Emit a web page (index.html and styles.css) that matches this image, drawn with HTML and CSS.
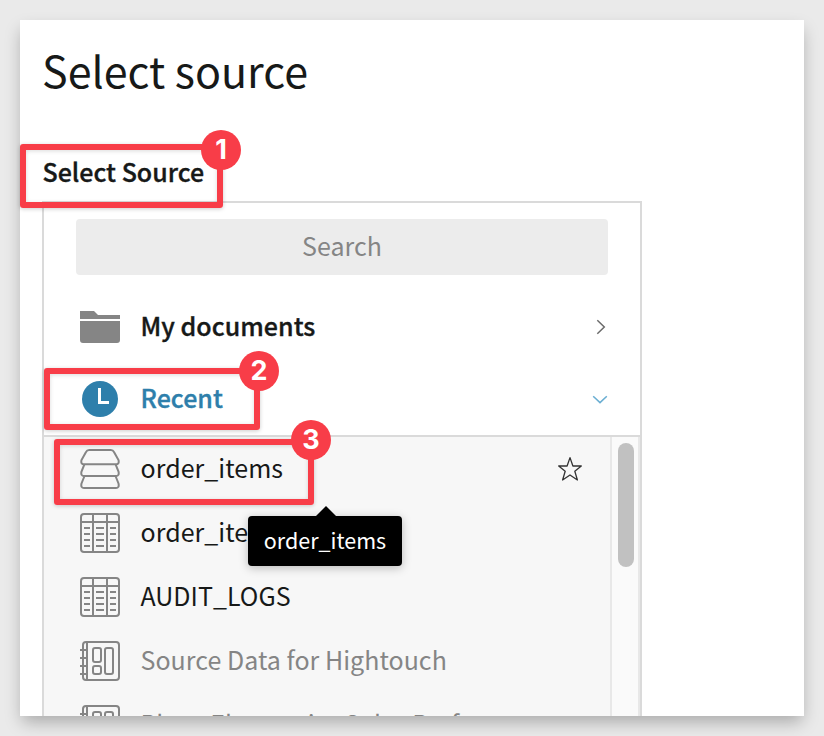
FILE: index.html
```html
<!DOCTYPE html>
<html lang="en">
<head>
<meta charset="utf-8">
<title>Select source</title>
<link rel="stylesheet" href="styles.css">
</head>
<body>
<svg class="defs" width="0" height="0">
  <symbol id="table" viewBox="0 0 40 40">
    <g fill="none" stroke="#858585" stroke-width="2">
      <rect x="1" y="1" width="38" height="38" rx="3"/>
      <path d="M1 9H39M13 1V39M27 1V39"/>
      <path d="M4 15H10M4 21H10M4 27H10M4 33H10M16 15H24M16 21H24M16 27H24M16 33H24M30 15H36M30 21H36M30 27H36M30 33H36"/>
    </g>
  </symbol>
  <symbol id="workbook" viewBox="0 0 40 40">
    <g fill="none" stroke="#858585" stroke-width="2">
      <rect x="3" y="1" width="36" height="38" rx="3"/>
      <path d="M7 1V39M0 9H7M0 17H7M0 25H7M0 33H7"/>
      <rect x="13" y="7" width="8" height="14" rx="2"/>
      <rect x="13" y="25" width="8" height="8" rx="2"/>
      <rect x="25" y="7" width="8" height="26" rx="2"/>
    </g>
  </symbol>
</svg>
<main class="card">
  <h1 class="title">Select source</h1>
  <h2 class="label">Select Source<span class="mark mark-1"><b class="badge">1</b></span></h2>
  <section class="panel">
    <div class="search">Search</div>
    <div class="group">
      <svg class="icon" viewBox="0 0 40 40" fill="#858585"><path d="M0 4H14L18 8H40V12H0ZM0 14H40V33Q40 36 37 36H3Q0 36 0 33Z"/></svg>
      <span class="name">My documents</span>
      <svg class="chevron" viewBox="0 0 16 16"><path d="M5.3 1.2L12.3 8L5.3 14.8" fill="none" stroke="#6b6b6b" stroke-width="1.5"/></svg>
    </div>
    <div class="group active">
      <svg class="icon" viewBox="0 0 40 40"><circle cx="20" cy="20" r="18" fill="#2e7fab"/><path d="M19.500 9V23.500H29" fill="none" stroke="#fff" stroke-width="3"/></svg>
      <span class="name">Recent</span>
      <svg class="chevron" viewBox="0 0 16 16"><path d="M1.2 5.2L8 11.6L14.8 5.2" fill="none" stroke="#6aaed2" stroke-width="1.5"/></svg>
      <span class="mark mark-2"><b class="badge">2</b></span>
    </div>
    <div class="results">
      <div class="list">
        <div class="item">
          <svg class="icon" viewBox="0 0 40 40" fill="none" stroke="#858585" stroke-width="2"><path d="M9.200 1H30.800Q33 1 34 3L38.500 11Q39.500 15.200 36 15.200H4Q.5 15.200 1.500 11L6 3Q7 1 9.200 1Z"/><path d="M4.500 15.200L1.500 22.500Q.500 27 4 27H36Q39.500 27 38.500 22.500L35.500 15.200"/><path d="M4.500 27L1.500 34.500Q.500 39 4 39H36Q39.500 39 38.500 34.500L35.500 27"/></svg>
          <span class="name">order_items</span>
          <svg class="star" viewBox="0 0 26 26"><path d="M13 1.600L15.900 10H24.300L17.800 15.200L20.400 24L13 19L5.600 24L8.200 15.200L1.700 10H10.100Z" fill="none" stroke="#333" stroke-width="1.300" stroke-linejoin="round"/></svg>
          <span class="mark mark-3"><b class="badge">3</b></span>
          <span class="tooltip">order_items</span>
        </div>
        <div class="item"><svg class="icon"><use href="#table"/></svg><span class="name">order_items</span></div>
        <div class="item"><svg class="icon"><use href="#table"/></svg><span class="name">AUDIT_LOGS</span></div>
        <div class="item muted"><svg class="icon"><use href="#workbook"/></svg><span class="name">Source Data for Hightouch</span></div>
        <div class="item muted"><svg class="icon"><use href="#workbook"/></svg><span class="name">Plugs Electronics Sales Performance</span></div>
      </div>
      <div class="track"><div class="thumb"></div></div>
    </div>
  </section>
</main>
</body>
</html>
```
FILE: styles.css
```css
* { box-sizing: border-box; }
html, body { height: 100%; margin: 0; }
body {
  padding: 20px;
  overflow: hidden;
  background: #eaeaea;
  color: #171918;
  font-family: "Noto Sans CJK SC", sans-serif;
}
.defs { position: absolute; }
.card {
  height: 696px;
  padding: 0 22px;
  background: #fff;
  box-shadow: 0 8px 16px -2px rgba(0, 0, 0, .28);
}
.title {
  height: 105px;
  margin: 0;
  font-size: 43px;
  font-weight: 400;
  line-height: 98px;
}
.label {
  position: relative;
  height: 76px;
  margin: 0;
  padding: 26px 0 0 .5px;
  font-size: 25px;
  font-weight: 500;
  line-height: 40px;
  -webkit-text-stroke: .35px currentColor;
}
.panel {
  width: 600px;
  height: 515px;
  border: 2px solid #dadada;
  border-bottom: 0;
}
.search {
  height: 56px;
  margin: 16px 32px;
  border-radius: 4px;
  background: #ececec;
  color: #858585;
  font-size: 25px;
  line-height: 52px;
  text-align: center;
}
.group {
  position: relative;
  display: flex;
  align-items: center;
  height: 72px;
  padding: 0 32px 0 36px;
  font-size: 25px;
  font-weight: 500;
}
.group .name { -webkit-text-stroke: .35px currentColor; }
.active { color: #2e7fab; }
.icon { flex: none; width: 40px; height: 40px; margin-right: 20px; }
.name { flex: 1; padding: 0 0 4px .5px; letter-spacing: .03px; white-space: nowrap; }
.chevron { width: 16px; height: 16px; }
.results {
  display: flex;
  height: 281px;
  border-top: 2px solid #dadada;
  background: #f7f7f7;
}
.list { flex: 1; height: 279px; clip-path: inset(-40px -40px 0 -40px); }
.item {
  position: relative;
  display: flex;
  align-items: center;
  height: 64px;
  padding: 0 27px 0 36px;
  font-size: 25px;
}
.muted { color: #858585; }
.star { width: 26px; height: 26px; }
.track {
  width: 30px;
  padding: 6px 0 0 6px;
  border: solid #e8e8e8;
  border-width: 0 2px;
  background: #fafafa;
}
.thumb { width: 16px; height: 124px; border-radius: 8px; background: #c1c1c1; }
.mark {
  position: absolute;
  z-index: 2;
  border: 6px solid #f83d48;
  border-radius: 3px;
  box-shadow: 0 1px 4px rgba(0, 0, 0, .2), inset 0 1px 4px rgba(0, 0, 0, .15);
}
.badge {
  position: absolute;
  top: -20px;
  right: -24px;
  width: 40px;
  height: 40px;
  border-radius: 50%;
  background: #f83d48;
  color: #fff;
  font: 700 27px/40px Inter, sans-serif;
  text-align: center;
  -webkit-text-stroke: 0;
}
.mark-1 { left: -22px; top: 19px; width: 203px; height: 64px; }
.mark-2 { left: 0; top: 5px; width: 216px; height: 62px; }
.mark-2 .badge { top: -23px; right: -25px; }
.mark-3 { left: 10px; top: 2px; width: 260px; height: 66px; }
.mark-3 .badge { top: -25px; right: -23px; }
.tooltip {
  position: absolute;
  z-index: 3;
  left: 204px;
  top: 79px;
  width: 154px;
  height: 50px;
  border-radius: 4px;
  background: #000;
  box-shadow: 0 2px 10px rgba(0, 0, 0, .25);
  color: #fff;
  font-size: 21.500px;
  line-height: 47px;
  text-align: center;
}
.tooltip::before {
  content: "";
  position: absolute;
  left: 68px;
  top: -10px;
  border: solid transparent;
  border-width: 0 10px 10px;
  border-bottom-color: #000;
}
```
